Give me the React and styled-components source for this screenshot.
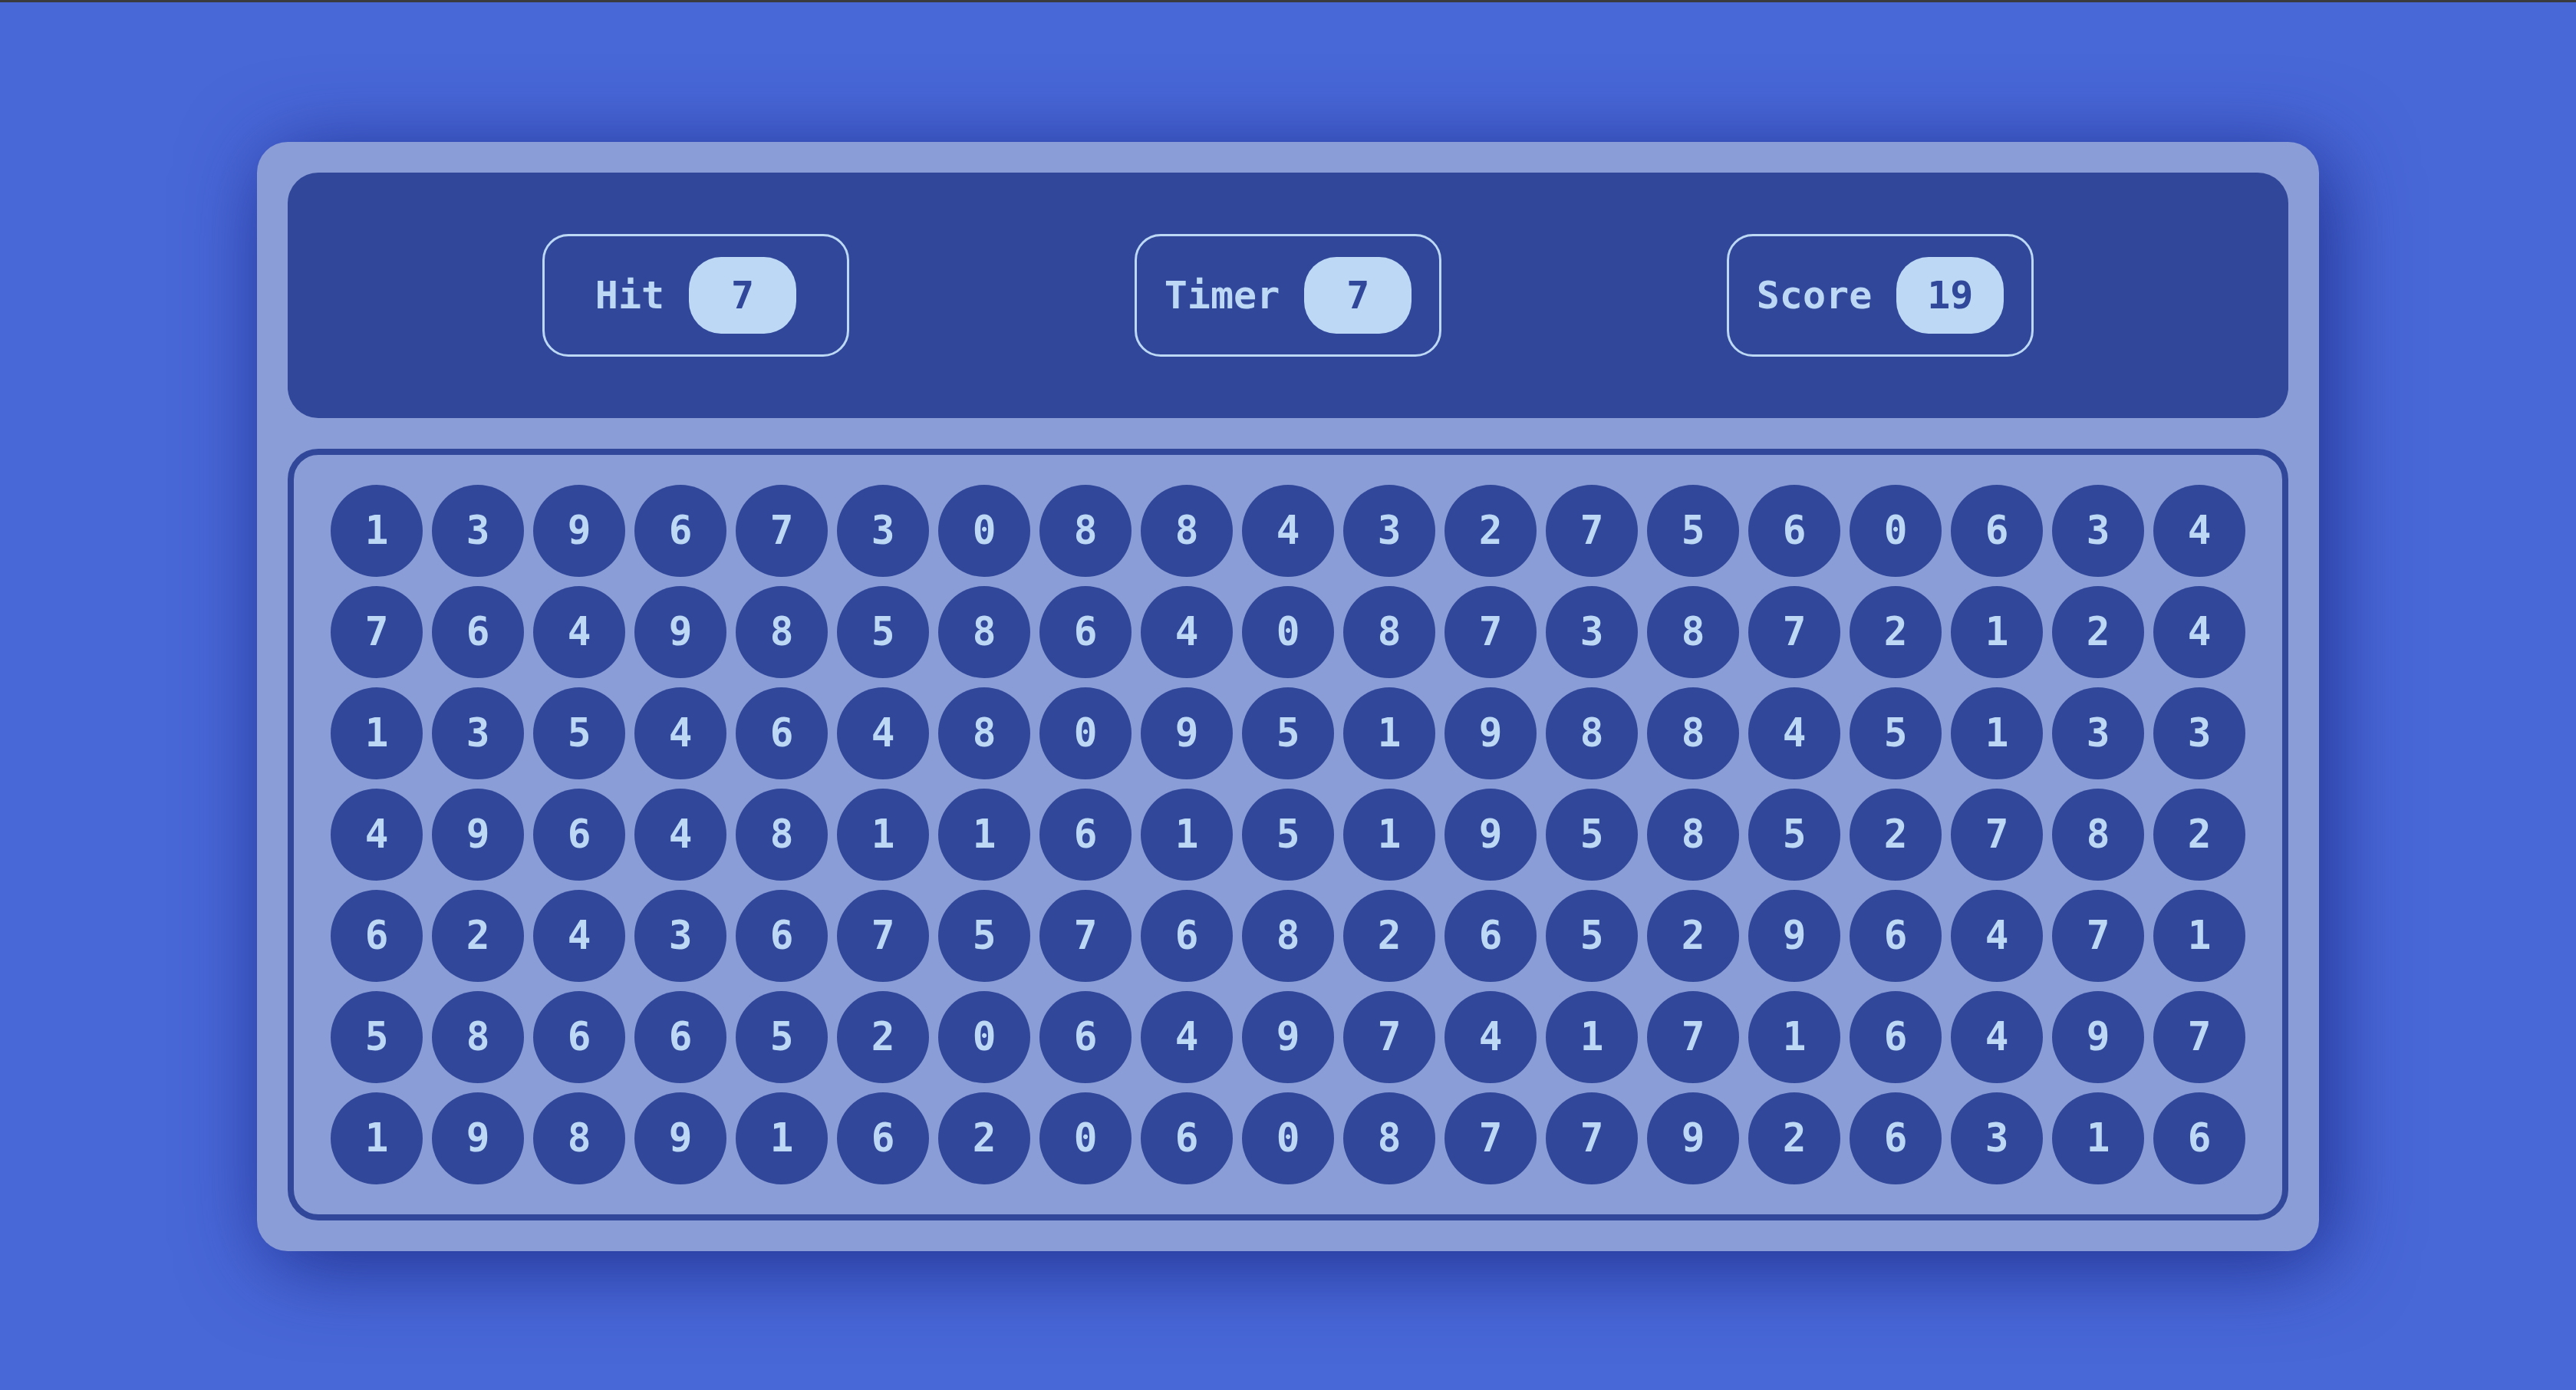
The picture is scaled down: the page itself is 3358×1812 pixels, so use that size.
import React from 'react';
import styled, { createGlobalStyle } from 'styled-components';

const GlobalStyle = createGlobalStyle`
  * {
    box-sizing: border-box;
  }

  body {
    margin: 0;
    background: #4968d8;
    font-family: "DejaVu Sans Mono", "Liberation Mono", monospace;
  }
`;

const Page = styled.main`
  min-height: 100vh;
  display: flex;
  align-items: center;
  justify-content: center;
  border-top: 3px solid #3a3b3e;
`;

const Card = styled.section`
  width: 2688px;
  padding: 40px;
  display: flex;
  flex-direction: column;
  gap: 40px;
  background: #8a9dd6;
  border-radius: 40px;
  box-shadow: 12px 16px 110px rgba(22, 36, 128, 0.85);
`;

const Header = styled.header`
  height: 320px;
  display: flex;
  align-items: center;
  justify-content: center;
  gap: 372px;
  background: #30479a;
  border-radius: 40px;
`;

const Stat = styled.div`
  width: 400px;
  height: 160px;
  display: flex;
  align-items: center;
  justify-content: center;
  gap: 32px;
  border: 3px solid #bcd8f5;
  border-radius: 34px;
`;

const Label = styled.span`
  color: #bcd8f5;
  font-size: 50px;
  font-weight: bold;
`;

const Value = styled.span`
  width: 140px;
  height: 100px;
  display: flex;
  align-items: center;
  justify-content: center;
  background: #bcd8f5;
  color: #30479a;
  font-size: 50px;
  font-weight: bold;
  border-radius: 42px;
`;

const Board = styled.div`
  display: flex;
  flex-wrap: wrap;
  justify-content: center;
  gap: 12px;
  padding: 39px 40px;
  border: 8px solid #30479a;
  border-radius: 40px;
`;

const Bubble = styled.div`
  width: 120px;
  height: 120px;
  display: flex;
  align-items: center;
  justify-content: center;
  background: #30479a;
  color: #bcd8f5;
  font-size: 51px;
  font-weight: bold;
  border-radius: 50%;
`;

const rows = [
  '1396730884327560634',
  '7649858640873872124',
  '1354648095198845133',
  '4964811615195852782',
  '6243675768265296471',
  '5866520649741716497',
  '1989162060877926316',
];

const stats = [
  { label: 'Hit', value: 7 },
  { label: 'Timer', value: 7 },
  { label: 'Score', value: 19 },
];

const App = () => {
  const digits = rows.join('').split('');

  return (
    <>
      <GlobalStyle />
      <Page>
        <Card>
          <Header>
            {stats.map((s) => (
              <Stat key={s.label}>
                <Label>{s.label}</Label>
                <Value>{s.value}</Value>
              </Stat>
            ))}
          </Header>

          <Board>
            {digits.map((d, i) => (
              <Bubble key={i}>{d}</Bubble>
            ))}
          </Board>
        </Card>
      </Page>
    </>
  );
};

export default App;
